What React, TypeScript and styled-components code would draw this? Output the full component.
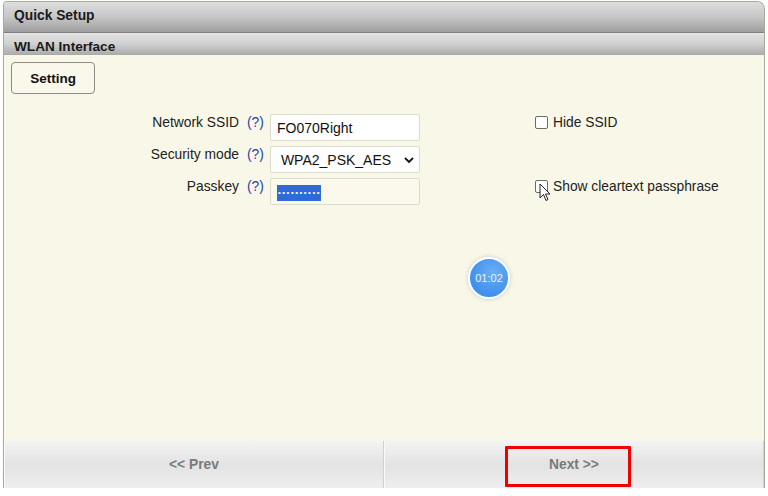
import React from "react";
import styled, { createGlobalStyle } from "styled-components";

const Global = createGlobalStyle`
  html, body { margin: 0; padding: 0; background: #ffffff; }
  body { font-family: "Liberation Sans", Arial, sans-serif; }
`;

const Panel = styled.div`
  position: relative;
  margin: 1px 3px 0 3px;
  width: 760px;
  border: 1px solid #a9a99c;
  border-bottom: none;
  border-radius: 4px 8px 0 0;
  overflow: hidden;
  background: #f9f8e8;
  box-shadow: 0 3px 2px -1px rgba(0,0,0,0.35);
`;

const TitleBar = styled.div`
  height: 31px;
  display: flex;
  align-items: center;
  padding: 0 0 4px 10px;
  box-sizing: border-box;
  font-size: 13.8px;
  font-weight: bold;
  color: #1a1a1a;
  background: linear-gradient(#dedede, #c6c6c6 50%, #9e9e9e);
  border-bottom: 1px solid #7f7f7f;
`;

const SubBar = styled.div`
  height: 22px;
  display: flex;
  align-items: center;
  padding: 4px 0 0 10px;
  box-sizing: border-box;
  font-size: 13.6px;
  font-weight: bold;
  color: #1a1a1a;
  background: linear-gradient(#e2e2e2, #cfcfcf 50%, #a9a9a9);
  border-top: 1px solid #e8e8e8;
`;

const Content = styled.div`
  height: 385px;
  padding: 7px 0 0 7px;
  box-sizing: border-box;
  position: relative;
`;

const TabButton = styled.div`
  width: 84px;
  height: 32px;
  box-sizing: border-box;
  border: 1px solid #8c8c84;
  border-radius: 4px;
  display: flex;
  align-items: center;
  justify-content: center;
  font-size: 13.5px;
  font-weight: bold;
  color: #111;
  background: #f9f8ea;
`;

const Form = styled.div`
  display: grid;
  grid-template-columns: 221px 17px 150px auto;
  column-gap: 7px;
  row-gap: 5px;
  margin: 20px 0 0 7px;
  align-items: start;
`;

const Label = styled.div`
  text-align: right;
  font-size: 13.8px;
  color: #222;
  padding-top: 1px;
`;

const Help = styled.span`
  font-size: 13.8px;
  color: #2b3fae;
  padding-top: 1px;
  margin-left: 1px;
`;

const Field = styled.div<{ $cream?: boolean }>`
  height: 27px;
  box-sizing: border-box;
  border: 1px solid #dcdccc;
  border-radius: 2px;
  background: ${(p) => (p.$cream ? "#faf9ec" : "#ffffff")};
  display: flex;
  align-items: center;
  padding: 0 6px;
  font-size: 14px;
  color: #111;
  position: relative;
`;

const Selected = styled.span`
  background: #2f6ad9;
  color: #ffffff;
  font-size: 8px;
  letter-spacing: 1.5px;
  line-height: 16px;
  padding: 0 0 0 1px;
  margin-top: 2px;
`;

const Chevron = styled.svg`
  position: absolute;
  right: 5px;
  top: 9px;
`;

const Check = styled.label`
  display: flex;
  align-items: center;
  gap: 5px;
  font-size: 13.8px;
  color: #222;
  margin-left: 108px;
  padding-top: 1px;
  position: relative;
`;

const Box = styled.span`
  width: 11px;
  height: 11px;
  border: 1px solid #6b6b6b;
  border-radius: 2px;
  background: #fff;
`;

const Cursor = styled.svg`
  position: absolute;
  left: 4px;
  top: 5px;
`;

const TimerWrap = styled.div`
  position: absolute;
  left: 464px;
  top: 202px;
  width: 38px;
  height: 38px;
  border-radius: 50%;
  border: 2px solid #ffffff;
  box-shadow: 0 0 4px rgba(120,160,220,0.5);
  background: radial-gradient(circle at 60% 35%, #6aaef6, #3f8fec 70%, #5aa2f2);
  color: #eef5ff;
  font-size: 11px;
  display: flex;
  align-items: center;
  justify-content: center;
`;

const Footer = styled.div`
  height: 47px;
  display: flex;
  border-top: 1px solid #f4f4f0;
`;

const NavButton = styled.div`
  flex: 1;
  display: flex;
  align-items: center;
  justify-content: center;
  font-size: 13.8px;
  font-weight: bold;
  color: #7a7a7a;
  background: linear-gradient(#f3f3f3, #e3e3e3 50%, #eeeeee);
  border-left: 1px solid #fafafa;
  border-right: 1px solid #d0d0d0;
`;

const Highlight = styled.div`
  position: absolute;
  left: 505px;
  top: 446px;
  width: 126px;
  height: 41px;
  border: 3px solid #f00000;
  box-sizing: border-box;
  border-radius: 1px;
`;

export default function App() {
  return (
    <>
      <Global />
      <Panel>
        <TitleBar>Quick Setup</TitleBar>
        <SubBar>WLAN Interface</SubBar>
        <Content>
          <TabButton>Setting</TabButton>
          <Form>
            <Label>Network SSID</Label>
            <Help>(?)</Help>
            <Field>FO070Right</Field>
            <Check>
              <Box />
              Hide SSID
            </Check>

            <Label>Security mode</Label>
            <Help>(?)</Help>
            <Field>
              &nbsp;WPA2_PSK_AES
              <Chevron width="10" height="8" viewBox="0 0 10 8">
                <path d="M1 2 L5 6 L9 2" stroke="#111" strokeWidth="1.8" fill="none" />
              </Chevron>
            </Field>
            <div />

            <Label>Passkey</Label>
            <Help>(?)</Help>
            <Field $cream>
              <Selected>••••••••••</Selected>
            </Field>
            <Check>
              <Box />
              Show cleartext passphrase
              <Cursor width="12" height="19" viewBox="0 0 12 19">
                <path d="M1 1 L1 15 L4.5 11.5 L7 17.5 L9 16.5 L6.5 11 L11 11 Z" fill="#fff" stroke="#222" strokeWidth="1" />
              </Cursor>
            </Check>
          </Form>
          <TimerWrap>01:02</TimerWrap>
        </Content>
        <Footer>
          <NavButton>&lt;&lt; Prev</NavButton>
          <NavButton>Next &gt;&gt;</NavButton>
        </Footer>
      </Panel>
      <Highlight />
    </>
  );
}
